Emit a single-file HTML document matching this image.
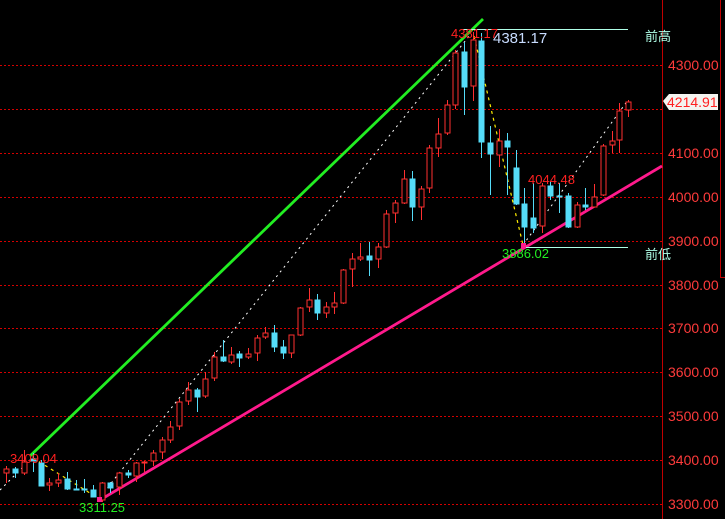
<!DOCTYPE html>
<html><head><meta charset="utf-8"><style>
html,body{margin:0;padding:0;background:#000;width:725px;height:519px;overflow:hidden}
svg{display:block}
text{font-family:"Liberation Sans",sans-serif}
</style></head><body>
<svg width="725" height="519" viewBox="0 0 725 519" xmlns="http://www.w3.org/2000/svg">
<g stroke="#d40000" stroke-width="1" stroke-dasharray="2,2">
<line x1="0" y1="65.5" x2="662" y2="65.5"/><line x1="0" y1="109.5" x2="662" y2="109.5"/>
<line x1="0" y1="153.5" x2="662" y2="153.5"/><line x1="0" y1="197.5" x2="662" y2="197.5"/>
<line x1="0" y1="241.5" x2="662" y2="241.5"/><line x1="0" y1="285.5" x2="662" y2="285.5"/>
<line x1="0" y1="328.5" x2="662" y2="328.5"/><line x1="0" y1="372.5" x2="662" y2="372.5"/>
<line x1="0" y1="416.5" x2="662" y2="416.5"/><line x1="0" y1="460.5" x2="662" y2="460.5"/>
<line x1="0" y1="504.5" x2="662" y2="504.5"/>
</g>
<line x1="662.5" y1="0" x2="662.5" y2="519" stroke="#c00000"/>
<line x1="720.5" y1="0" x2="720.5" y2="277" stroke="#c00000"/>
<line x1="720" y1="277.5" x2="725" y2="277.5" stroke="#c00000"/>
<g fill="#ff3b3b" font-size="14">
<text x="668" y="70">4300.00</text><text x="668" y="158">4100.00</text>
<text x="668" y="202">4000.00</text><text x="668" y="246">3900.00</text><text x="668" y="290">3800.00</text>
<text x="668" y="333">3700.00</text><text x="668" y="377">3600.00</text><text x="668" y="421">3500.00</text>
<text x="668" y="465">3400.00</text><text x="668" y="509">3300.00</text>
</g>
<polygon points="663,101 669,94 718,94 718,110 669,110" fill="#f4f4f0"/>
<text x="667" y="107" fill="#ff2020" font-size="14">4214.91</text>
<line x1="100" y1="500" x2="662" y2="166" stroke="#ff1a8c" stroke-width="2.8"/>
<line x1="30" y1="456" x2="483" y2="19" stroke="#22ee22" stroke-width="2.8"/>
<polyline points="0,490 33,457" fill="none" stroke="#fff" stroke-dasharray="2,4"/>
<polyline points="100,497 470,35" fill="none" stroke="#fff" stroke-dasharray="2,4"/>
<polyline points="523,245 628,100" fill="none" stroke="#fff" stroke-dasharray="2,4"/>
<polyline points="33,458 98,498" fill="none" stroke="#ffee00" stroke-dasharray="3,4" stroke-width="1.2"/>
<polyline points="474,36 523,245" fill="none" stroke="#ffee00" stroke-dasharray="3,4" stroke-width="1.2"/>
<line x1="463" y1="29.5" x2="628" y2="29.5" stroke="#b0ffe8"/>
<line x1="523" y1="247.5" x2="628" y2="247.5" stroke="#b0ffe8"/>
<text x="645" y="41" fill="#b0ffe8" font-size="13" font-family="Liberation Sans,Noto Sans CJK SC,sans-serif">前高</text>
<text x="645" y="259" fill="#b0ffe8" font-size="13" font-family="Liberation Sans,Noto Sans CJK SC,sans-serif">前低</text>
<g stroke-width="1">
<g stroke="#ff3030" fill="#000">
<line x1="6.5" y1="466" x2="6.5" y2="483"/><rect x="4" y="469" width="5" height="4"/>
<line x1="24.5" y1="450" x2="24.5" y2="475"/><rect x="22" y="462" width="5" height="11"/>
<line x1="49.5" y1="478" x2="49.5" y2="491"/><rect x="47" y="483" width="5" height="2"/>
<line x1="58.5" y1="473" x2="58.5" y2="487"/><rect x="56" y="480" width="5" height="3"/>
<line x1="102.5" y1="482" x2="102.5" y2="502"/><rect x="100" y="483" width="5" height="17"/>
<line x1="119.5" y1="472" x2="119.5" y2="495"/><rect x="117" y="473" width="5" height="14"/>
<line x1="136.5" y1="462" x2="136.5" y2="482"/><rect x="134" y="463" width="5" height="13"/>
<line x1="144.5" y1="461" x2="144.5" y2="472"/><rect x="142" y="462" width="5" height="1"/>
<line x1="153.5" y1="450" x2="153.5" y2="466"/><rect x="151" y="453" width="5" height="8"/>
<line x1="162.5" y1="437" x2="162.5" y2="459"/><rect x="160" y="440" width="5" height="12"/>
<line x1="170.5" y1="421" x2="170.5" y2="443"/><rect x="168" y="427" width="5" height="13"/>
<line x1="179.5" y1="399" x2="179.5" y2="430"/><rect x="177" y="402" width="5" height="24"/>
<line x1="188.5" y1="382" x2="188.5" y2="405"/><rect x="186" y="390" width="5" height="11"/>
<line x1="205.5" y1="372" x2="205.5" y2="398"/><rect x="203" y="379" width="5" height="17"/>
<line x1="214.5" y1="352" x2="214.5" y2="381"/><rect x="212" y="357" width="5" height="21"/>
<line x1="231.5" y1="347" x2="231.5" y2="364"/><rect x="229" y="355" width="5" height="7"/>
<line x1="248.5" y1="348" x2="248.5" y2="359"/><rect x="246" y="354" width="5" height="3"/>
<line x1="257.5" y1="335" x2="257.5" y2="361"/><rect x="255" y="338" width="5" height="15"/>
<line x1="265.5" y1="327" x2="265.5" y2="339"/><rect x="263" y="333" width="5" height="4"/>
<line x1="291.5" y1="335" x2="291.5" y2="358"/><rect x="289" y="335" width="5" height="18"/>
<line x1="300.5" y1="307" x2="300.5" y2="336"/><rect x="298" y="308" width="5" height="27"/>
<line x1="309.5" y1="288" x2="309.5" y2="312"/><rect x="307" y="300" width="5" height="7"/>
<line x1="326.5" y1="302" x2="326.5" y2="318"/><rect x="324" y="307" width="5" height="6"/>
<line x1="334.5" y1="292" x2="334.5" y2="314"/><rect x="332" y="303" width="5" height="4"/>
<line x1="343.5" y1="269" x2="343.5" y2="304"/><rect x="341" y="270" width="5" height="33"/>
<line x1="352.5" y1="253" x2="352.5" y2="287"/><rect x="350" y="259" width="5" height="10"/>
<line x1="360.5" y1="243" x2="360.5" y2="261"/><rect x="358" y="257" width="5" height="2"/>
<line x1="378.5" y1="243" x2="378.5" y2="268"/><rect x="376" y="247" width="5" height="12"/>
<line x1="386.5" y1="210" x2="386.5" y2="248"/><rect x="384" y="214" width="5" height="33"/>
<line x1="395.5" y1="200" x2="395.5" y2="223"/><rect x="393" y="203" width="5" height="10"/>
<line x1="404.5" y1="170" x2="404.5" y2="204"/><rect x="402" y="179" width="5" height="24"/>
<line x1="421.5" y1="186" x2="421.5" y2="220"/><rect x="419" y="189" width="5" height="18"/>
<line x1="429.5" y1="145" x2="429.5" y2="193"/><rect x="427" y="148" width="5" height="40"/>
<line x1="438.5" y1="118" x2="438.5" y2="157"/><rect x="436" y="134" width="5" height="14"/>
<line x1="447.5" y1="100" x2="447.5" y2="135"/><rect x="445" y="105" width="5" height="28"/>
<line x1="455.5" y1="50" x2="455.5" y2="109"/><rect x="453" y="53" width="5" height="52"/>
<line x1="473.5" y1="32" x2="473.5" y2="101"/><rect x="471" y="40" width="5" height="46"/>
<line x1="499.5" y1="129" x2="499.5" y2="167"/><rect x="497" y="141" width="5" height="14"/>
<line x1="542.5" y1="183" x2="542.5" y2="233"/><rect x="540" y="186" width="5" height="40"/>
<line x1="577.5" y1="202" x2="577.5" y2="228"/><rect x="575" y="205" width="5" height="22"/>
<line x1="594.5" y1="184" x2="594.5" y2="207"/><rect x="592" y="197" width="5" height="10"/>
<line x1="603.5" y1="144" x2="603.5" y2="196"/><rect x="601" y="146" width="5" height="49"/>
<line x1="612.5" y1="131" x2="612.5" y2="153"/><rect x="610" y="141" width="5" height="4"/>
<line x1="619.5" y1="103" x2="619.5" y2="153"/><rect x="617" y="111" width="5" height="29"/>
<line x1="628.5" y1="100" x2="628.5" y2="117"/><rect x="626" y="102" width="5" height="8"/>
</g>
<g stroke="#55dcf8" fill="#55dcf8">
<line x1="15.5" y1="467" x2="15.5" y2="478"/><rect x="13" y="469" width="5" height="4"/>
<line x1="33.5" y1="453" x2="33.5" y2="472"/><rect x="31" y="459" width="5" height="2"/>
<line x1="41.5" y1="460" x2="41.5" y2="486"/><rect x="39" y="463" width="5" height="23"/>
<line x1="67.5" y1="472" x2="67.5" y2="490"/><rect x="65" y="479" width="5" height="10"/>
<line x1="76.5" y1="480" x2="76.5" y2="490"/><rect x="74" y="489" width="5" height="1"/>
<line x1="84.5" y1="479" x2="84.5" y2="493"/><rect x="82" y="489" width="5" height="1"/>
<line x1="93.5" y1="485" x2="93.5" y2="497"/><rect x="91" y="490" width="5" height="7"/>
<line x1="110.5" y1="482" x2="110.5" y2="493"/><rect x="108" y="483" width="5" height="5"/>
<line x1="128.5" y1="470" x2="128.5" y2="478"/><rect x="126" y="473" width="5" height="2"/>
<line x1="197.5" y1="388" x2="197.5" y2="412"/><rect x="195" y="390" width="5" height="7"/>
<line x1="223.5" y1="340" x2="223.5" y2="362"/><rect x="221" y="357" width="5" height="4"/>
<line x1="239.5" y1="351" x2="239.5" y2="367"/><rect x="237" y="354" width="5" height="4"/>
<line x1="274.5" y1="325" x2="274.5" y2="352"/><rect x="272" y="333" width="5" height="14"/>
<line x1="283.5" y1="340" x2="283.5" y2="359"/><rect x="281" y="347" width="5" height="6"/>
<line x1="317.5" y1="294" x2="317.5" y2="320"/><rect x="315" y="300" width="5" height="13"/>
<line x1="369.5" y1="242" x2="369.5" y2="276"/><rect x="367" y="256" width="5" height="4"/>
<line x1="412.5" y1="171" x2="412.5" y2="221"/><rect x="410" y="179" width="5" height="28"/>
<line x1="464.5" y1="42" x2="464.5" y2="115"/><rect x="462" y="52" width="5" height="35"/>
<line x1="481.5" y1="33" x2="481.5" y2="158"/><rect x="479" y="41" width="5" height="101"/>
<line x1="490.5" y1="126" x2="490.5" y2="195"/><rect x="488" y="143" width="5" height="11"/>
<line x1="507.5" y1="133" x2="507.5" y2="195"/><rect x="505" y="141" width="5" height="6"/>
<line x1="516.5" y1="150" x2="516.5" y2="205"/><rect x="514" y="168" width="5" height="36"/>
<line x1="524.5" y1="188" x2="524.5" y2="247"/><rect x="522" y="204" width="5" height="23"/>
<line x1="533.5" y1="183" x2="533.5" y2="233"/><rect x="531" y="218" width="5" height="10"/>
<line x1="550.5" y1="182" x2="550.5" y2="200"/><rect x="548" y="186" width="5" height="10"/>
<line x1="559.5" y1="183" x2="559.5" y2="213"/><rect x="557" y="196" width="5" height="1"/>
<line x1="568.5" y1="193" x2="568.5" y2="228"/><rect x="566" y="196" width="5" height="31"/>
<line x1="585.5" y1="188" x2="585.5" y2="210"/><rect x="583" y="205" width="5" height="2"/>
</g>
</g>
<rect x="97" y="497" width="5" height="5" fill="#ff1a8c"/>
<rect x="521" y="243" width="5" height="5" fill="#ff1a8c"/>
<g font-size="13">
<text x="10" y="463" fill="#ff2020">3409.04</text>
<text x="79" y="512" fill="#22ee22">3311.25</text>
<text x="502" y="258" fill="#22ee22">3886.02</text>
<text x="528" y="184" fill="#ff2020">4044.48</text>
<text x="451" y="38" fill="#ff2020">4381.17</text>
<text x="493" y="43" fill="#c8dcff" font-size="15">4381.17</text>
</g>
</svg>
</body></html>
